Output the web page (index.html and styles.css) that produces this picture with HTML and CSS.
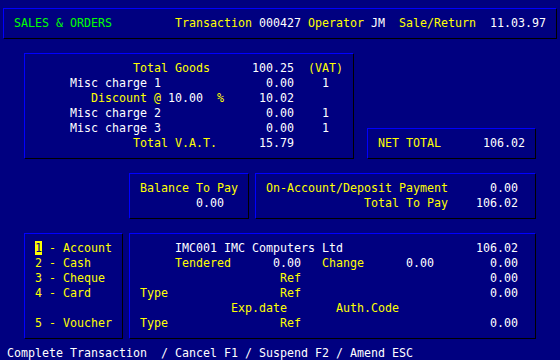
FILE: index.html
```html
<!DOCTYPE html>
<html lang="en">
<head>
  <meta charset="UTF-8" />
  <title>Sales &amp; Orders - Transaction</title>
  <link rel="stylesheet" href="styles.css">
</head>
<body>
  <div class="screen">
    <div class="panel head">
      <div class="ln"> <span class="g">SALES &amp; ORDERS</span>         <span class="y">Transaction</span> 000427 <span class="y">Operator</span> JM  <span class="y">Sale/Return</span>  11.03.97</div>
    </div>

    <div class="panel totals">
      <div class="ln">               <span class="y">Total Goods</span>      100.25  <span class="y">(VAT)</span></div>
      <div class="ln">      Misc charge 1               0.00    1</div>
      <div class="ln">         <span class="y">Discount @</span> 10.00  <span class="y">%</span>     10.02</div>
      <div class="ln">      Misc charge 2               0.00    1</div>
      <div class="ln">      Misc charge 3               0.00    1</div>
      <div class="ln">               <span class="y">Total V.A.T.</span>      15.79</div>
    </div>

    <div class="panel net">
      <div class="ln"> <span class="y">NET TOTAL</span>      106.02</div>
    </div>

    <div class="panel balance">
      <div class="ln"> <span class="y">Balance To Pay</span></div>
      <div class="ln">         0.00</div>
    </div>

    <div class="panel deposit">
      <div class="ln"> <span class="y">On-Account/Deposit Payment</span>      0.00</div>
      <div class="ln">               <span class="y">Total To Pay</span>    106.02</div>
    </div>

    <div class="panel tender y">
      <div class="ln"> <span class="hl">1</span> - Account</div>
      <div class="ln"> 2 - Cash</div>
      <div class="ln"> 3 - Cheque</div>
      <div class="ln"> 4 - Card</div>
      <div class="ln"> </div>
      <div class="ln"> 5 - Voucher</div>
    </div>

    <div class="panel detail">
      <div class="ln">      IMC001 IMC Computers Ltd                   106.02</div>
      <div class="ln">      <span class="y">Tendered</span>      0.00   <span class="y">Change</span>      0.00        0.00</div>
      <div class="ln">                     <span class="y">Ref</span>                           0.00</div>
      <div class="ln"> <span class="y">Type</span>                <span class="y">Ref</span>                           0.00</div>
      <div class="ln">              <span class="y">Exp.date</span>       <span class="y">Auth.Code</span></div>
      <div class="ln"> <span class="y">Type</span>                <span class="y">Ref</span>                           0.00</div>
    </div>

    <div class="footer">
      <div class="ln">Complete Transaction  / Cancel F1 / Suspend F2 / Amend ESC</div>
    </div>
  </div>
</body>
</html>
```

FILE: styles.css
```css
body {
  margin: 0;
  background: #000080;
  color: #ffffff;
  font-family: "DejaVu Sans Mono", monospace;
  font-size: 11.63px;
}

/* 80 x 24 text screen, 7x15 cells */
.screen {
  display: grid;
  grid-template-columns: repeat(80, 7px);
  grid-template-rows: repeat(24, 15px);
  width: 560px;
  height: 360px;
  background: #000080;
}

.panel {
  margin: 8px 3px 6px 3px;
  padding: 6px 0 0 3px;
  border: 1px solid;
  border-color: #0000ff #000000 #000000 #0000ff;
}

.ln {
  white-space: pre;
  line-height: 14px;
  padding-top: 1px;
}

.y { color: #ffff00; }
.g { color: #00ff00; }

.hl {
  background: #ffff00;
  color: #000080;
}

.head { grid-column: 1 / 81; grid-row: 1 / 4; }
.totals { grid-column: 4 / 52; grid-row: 4 / 12; }
.net { grid-column: 53 / 78; grid-row: 9 / 12; }
.balance { grid-column: 19 / 37; grid-row: 12 / 16; }
.deposit { grid-column: 37 / 78; grid-row: 12 / 16; }
.tender { grid-column: 4 / 19; grid-row: 16 / 24; }
.detail { grid-column: 19 / 78; grid-row: 16 / 24; }

.footer {
  grid-column: 1 / 81;
  grid-row: 24 / 25;
  padding-left: 7px;
}
```
